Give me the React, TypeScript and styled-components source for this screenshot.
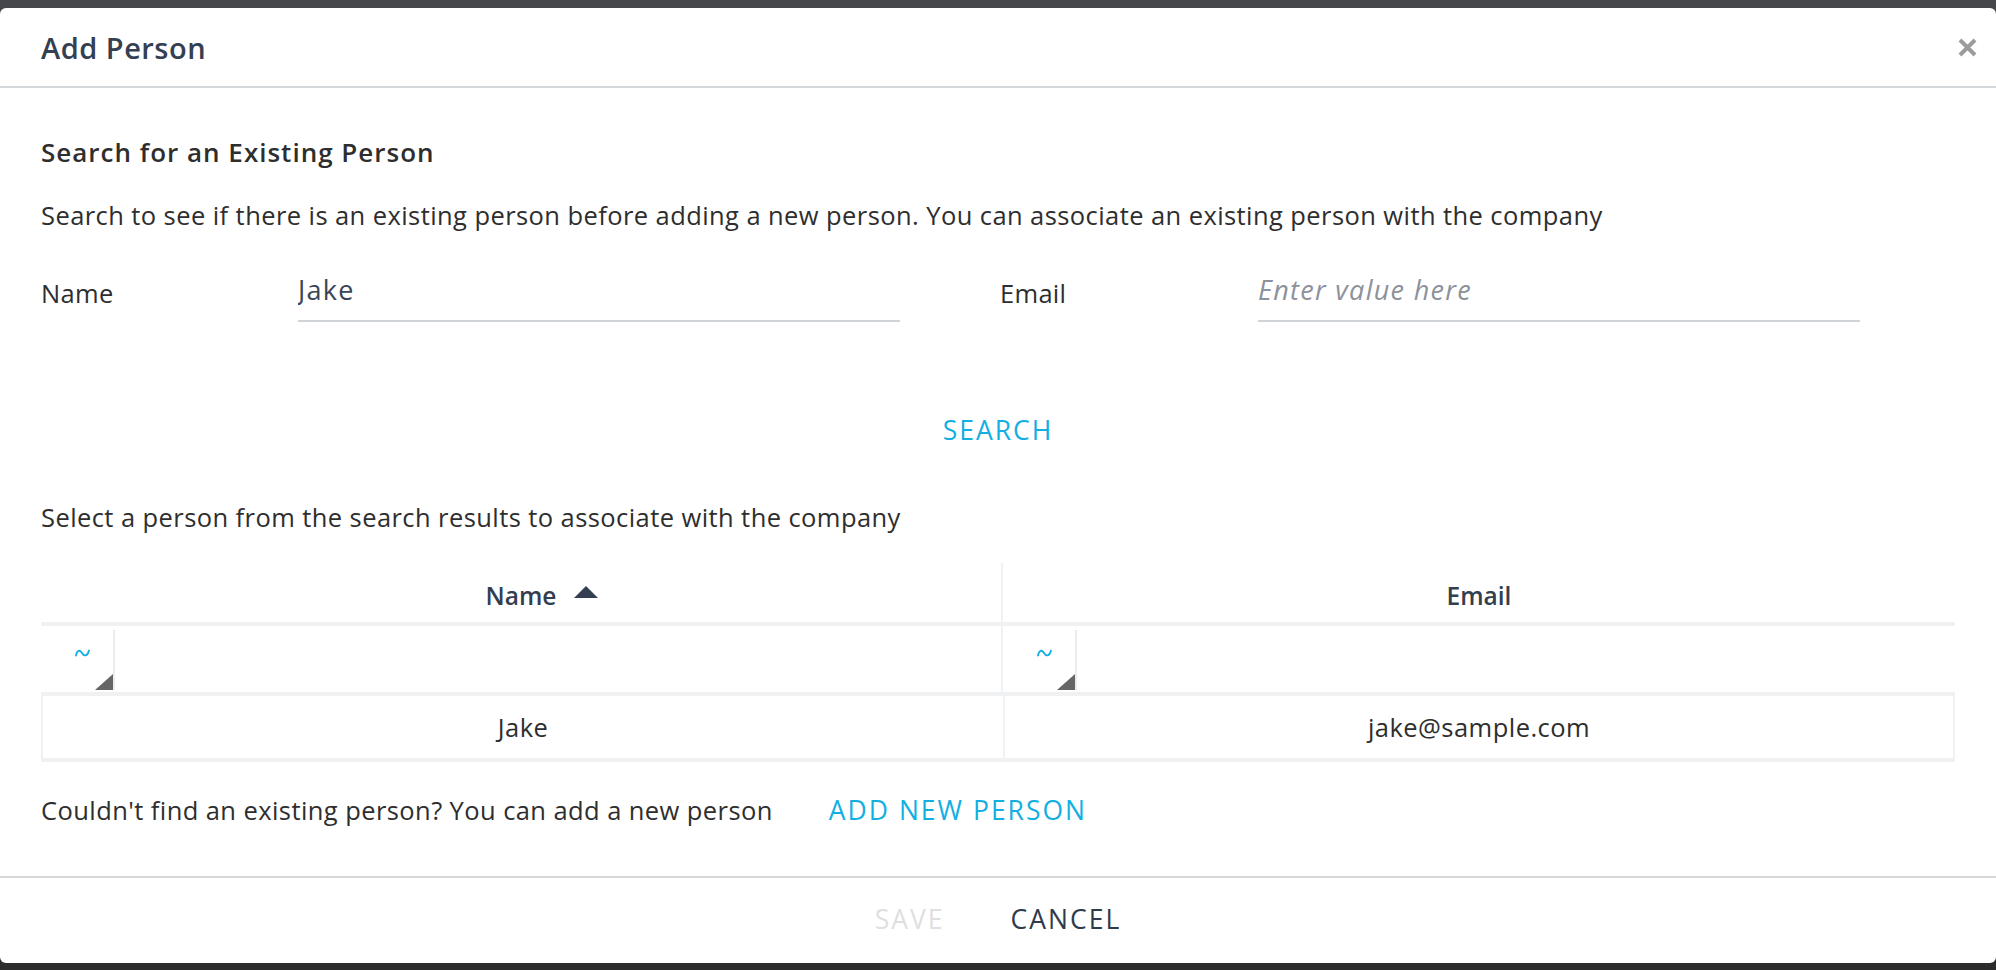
import React from "react";
import styled, { createGlobalStyle } from "styled-components";

const Global = createGlobalStyle`
  html, body { margin: 0; padding: 0; }
  body {
    background: linear-gradient(180deg, #45474a 0%, #3a3b3d 60%, #2c2c2c 100%);
    font-family: "Open Sans", "Liberation Sans", sans-serif;
    overflow: hidden;
  }
  * { box-sizing: border-box; }
`;

const Backdrop = styled.div`
  height: 970px;
  padding-top: 8px;
`;

const Modal = styled.div`
  height: 955px;
  background: #fff;
  border-radius: 6px;
  display: flex;
  flex-direction: column;
`;

const Header = styled.div`
  height: 80px;
  padding: 0 18px 0 41px;
  display: flex;
  align-items: center;
  justify-content: space-between;
  border-bottom: 2px solid #d5d8db;
`;

const Title = styled.h1`
  margin: 0;
  font-size: 29px;
  letter-spacing: 0.5px;
  font-weight: 600;
  color: #344052;
`;

const CloseButton = styled.button`
  width: 22px;
  height: 22px;
  padding: 0;
  border: none;
  background: none;
  display: flex;
  align-items: center;
  justify-content: center;
  cursor: pointer;
`;

const Body = styled.div`
  flex: 1;
  padding: 44px 41px 0 41px;
  display: flex;
  flex-direction: column;
`;

const SectionTitle = styled.h2`
  margin: 0;
  height: 40px;
  line-height: 40px;
  font-size: 26px;
  letter-spacing: 1px;
  font-weight: 600;
  color: #2e2e2e;
`;

const Text = styled.p<{ $mt: number }>`
  margin: ${(p) => p.$mt}px 0 0 0;
  height: 40px;
  line-height: 40px;
  font-size: 25.5px;
  letter-spacing: 0.42px;
  color: #2e2e2e;
  white-space: nowrap;
`;

const FormRow = styled.div`
  margin-top: 35px;
  display: grid;
  grid-template-columns: 257px 602px 100px 258px 602px;
`;

const Label = styled.label`
  padding-top: 8px;
  line-height: 30px;
  font-size: 25.5px;
  letter-spacing: 0.3px;
  color: #2e2e2e;
`;

const Input = styled.input`
  height: 52px;
  padding: 4px 0 16px 0;
  line-height: 30px;
  border: none;
  border-bottom: 2px solid #d0d4d8;
  outline: none;
  font-family: inherit;
  font-size: 27px;
  letter-spacing: 1.3px;
  color: #3a4555;
  background: transparent;
  &::placeholder {
    color: #8c919a;
    font-style: italic;
  }
`;

const Centered = styled.div<{ $mt: number }>`
  margin-top: ${(p) => p.$mt}px;
  display: flex;
  justify-content: center;
`;

const LinkButton = styled.button<{ $tone: "blue" | "dark" | "disabled" }>`
  height: 44px;
  padding: 0;
  border: none;
  background: none;
  font-family: inherit;
  font-size: 26.5px;
  letter-spacing: 2px;
  cursor: pointer;
  color: ${(p) =>
    p.$tone === "blue" ? "#13afe3" : p.$tone === "dark" ? "#2f3a4b" : "#dedfe0"};
`;

const Table = styled.div`
  margin-top: 26px;
  display: flex;
  flex-direction: column;
`;

const Row = styled.div<{ $h: number; $boxed?: boolean }>`
  height: ${(p) => p.$h}px;
  display: grid;
  grid-template-columns: 960px 1fr;
  border-bottom: 4px solid #eff1f3;
  ${(p) => (p.$boxed ? "border-left: 2px solid #eff1f3; border-right: 2px solid #eff1f3;" : "")}
`;

const HeadCell = styled.div`
  display: flex;
  align-items: center;
  justify-content: center;
  padding-top: 6px;
  font-size: 24.5px;
  font-weight: 600;
  color: #333e4f;
  & + & { border-left: 2px solid #eff1f3; }
`;

const HeadLabel = styled.span`
  position: relative;
`;

const SortArrow = styled.span`
  position: absolute;
  left: calc(100% + 18px);
  top: 50%;
  margin-top: -10px;
  width: 0;
  height: 0;
  border-left: 12px solid transparent;
  border-right: 12px solid transparent;
  border-bottom: 12px solid #344052;
`;

const FilterCell = styled.div`
  display: flex;
  align-items: stretch;
  & + & { border-left: 2px solid #eff1f3; }
`;

const FilterToggle = styled.div`
  position: relative;
  width: 74px;
  margin: 4px 0 2px 0;
  border-right: 2px solid #ececec;
  display: flex;
  justify-content: center;
  padding: 18px 0 0 10px;
`;

const Corner = styled.span`
  position: absolute;
  right: 0;
  bottom: 0;
  width: 0;
  height: 0;
  border-left: 18px solid transparent;
  border-bottom: 16px solid #666;
`;

const FilterInput = styled.input`
  flex: 1;
  border: none;
  outline: none;
  background: transparent;
`;

const DataCell = styled.div`
  display: flex;
  align-items: center;
  justify-content: center;
  font-size: 25.5px;
  letter-spacing: 0.46px;
  color: #2e2e2e;
  & + & { border-left: 2px solid #eff1f3; }
`;

const AddRow = styled.div`
  margin-top: 28px;
  height: 40px;
  display: flex;
  align-items: center;
  gap: 56px;
`;

const AddText = styled.span`
  font-size: 25.5px;
  letter-spacing: 0.42px;
  color: #2e2e2e;
`;

const Footer = styled.div`
  height: 87px;
  border-top: 2px solid #d5d8db;
  padding-bottom: 4px;
  display: flex;
  align-items: center;
  justify-content: center;
  gap: 66px;
`;

const Wave = () => (
  <svg width="15" height="10" viewBox="0 0 15 10">
    <path d="M1 7.5 C2 2 5 1.5 7 5 C9 8.5 12.5 8.5 14 2.5" fill="none" stroke="#13afe3" strokeWidth="1.8" strokeLinecap="round" />
  </svg>
);

export default function App() {
  return (
    <>
      <Global />
      <Backdrop>
        <Modal>
          <Header>
            <Title>Add Person</Title>
            <CloseButton aria-label="Close">
              <svg width="21" height="21" viewBox="0 0 21 21">
                <path d="M3 3 L18 18 M18 3 L3 18" stroke="#9b9b9b" strokeWidth="4" strokeLinecap="butt" />
              </svg>
            </CloseButton>
          </Header>
          <Body>
            <SectionTitle>Search for an Existing Person</SectionTitle>
            <Text $mt={23}>
              Search to see if there is an existing person before adding a new person. You can associate an existing person with the company
            </Text>
            <FormRow>
              <Label>Name</Label>
              <Input defaultValue="Jake" />
              <span />
              <Label>Email</Label>
              <Input placeholder="Enter value here" />
            </FormRow>
            <Centered $mt={86}>
              <LinkButton $tone="blue">SEARCH</LinkButton>
            </Centered>
            <Text $mt={45}>Select a person from the search results to associate with the company</Text>
            <Table>
              <Row $h={63}>
                <HeadCell>
                  <HeadLabel>
                    Name
                    <SortArrow />
                  </HeadLabel>
                </HeadCell>
                <HeadCell>
                  <HeadLabel>Email</HeadLabel>
                </HeadCell>
              </Row>
              <Row $h={70}>
                <FilterCell>
                  <FilterToggle>
                    <Wave />
                    <Corner />
                  </FilterToggle>
                  <FilterInput />
                </FilterCell>
                <FilterCell>
                  <FilterToggle>
                    <Wave />
                    <Corner />
                  </FilterToggle>
                  <FilterInput />
                </FilterCell>
              </Row>
              <Row $h={66} $boxed>
                <DataCell>Jake</DataCell>
                <DataCell>jake@sample.com</DataCell>
              </Row>
            </Table>
            <AddRow>
              <AddText>Couldn't find an existing person? You can add a new person</AddText>
              <LinkButton $tone="blue">ADD NEW PERSON</LinkButton>
            </AddRow>
          </Body>
          <Footer>
            <LinkButton $tone="disabled">SAVE</LinkButton>
            <LinkButton $tone="dark">CANCEL</LinkButton>
          </Footer>
        </Modal>
      </Backdrop>
    </>
  );
}
